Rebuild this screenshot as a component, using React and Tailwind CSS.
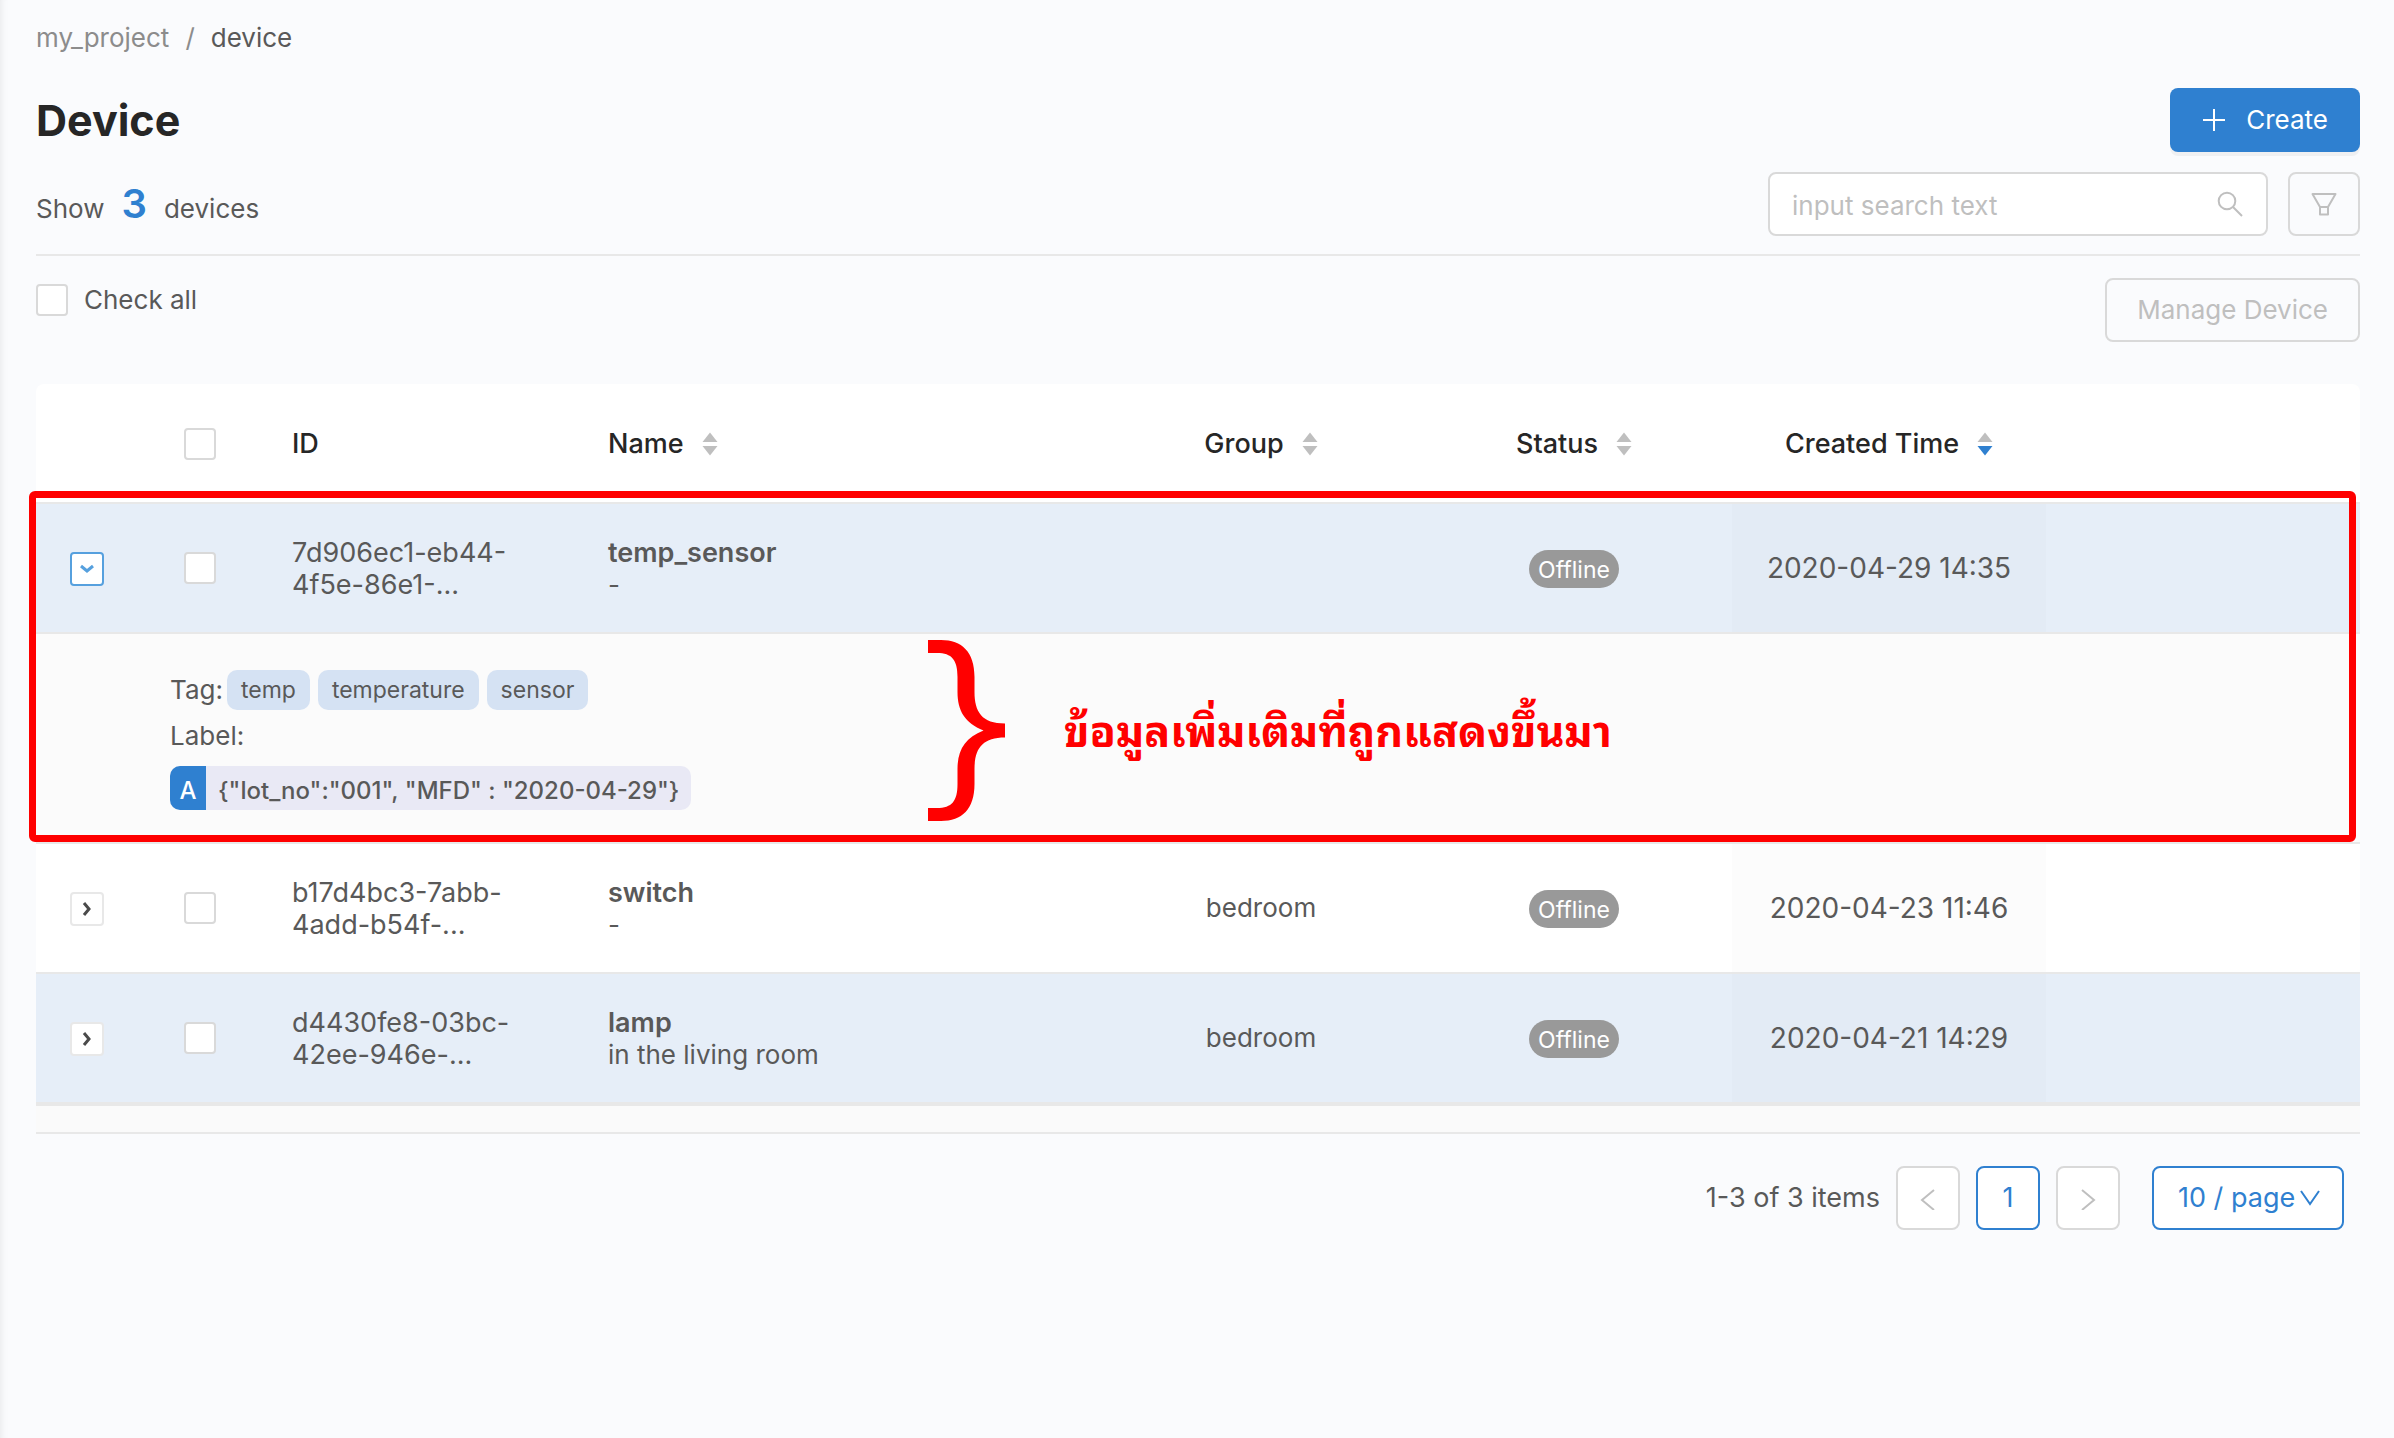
const devices = [
  { id: ["7d906ec1-eb44-", "4f5e-86e1-..."], name: "temp_sensor", description: "-", group: "", created: "2020-04-29 14:35", striped: true, expanded: true },
  { id: ["b17d4bc3-7abb-", "4add-b54f-..."], name: "switch", description: "-", group: "bedroom", created: "2020-04-23 11:46", striped: false, expanded: false },
  { id: ["d4430fe8-03bc-", "42ee-946e-..."], name: "lamp", description: "in the living room", group: "bedroom", created: "2020-04-21 14:29", striped: true, expanded: false },
];

function Checkbox(props) {
  return (
    <input
      type="checkbox"
      className="block size-8 shrink-0 appearance-none rounded-sm border-2 border-[#d9d9d9] bg-white"
      {...props}
    />
  );
}

function Sorter({ active }) {
  return (
    <svg viewBox="0 0 16 24" className="h-6 w-4" aria-hidden="true">
      <path d="M8 0.5 15.5 10H0.5Z" fill="#bfbfbf" />
      <path d="M8 23.5 15.5 14H0.5Z" fill={active ? "#2f80d0" : "#bfbfbf"} />
    </svg>
  );
}

function SortHeader({ label, active, centered }) {
  return (
    <button type="button" className={`flex items-center gap-[18px] font-medium ${centered ? "mx-auto" : ""}`}>
      {label}
      <Sorter active={active} />
    </button>
  );
}

function ExpandButton({ expanded, name }) {
  return (
    <button
      type="button"
      aria-expanded={expanded}
      aria-label={`Details of ${name}`}
      className={`mx-auto flex size-[34px] items-center justify-center rounded-sm border-2 bg-white ${
        expanded ? "border-[#56a0de] text-[#56a0de]" : "border-[#e8e8e8] text-[#4a4a4a]"
      }`}
    >
      <svg viewBox="0 0 16 16" className={`size-4 ${expanded ? "rotate-90" : ""}`} fill="none" stroke="currentColor" strokeWidth="3">
        <path d="M5 2 10 8 5 14" />
      </svg>
    </button>
  );
}

function DeviceDetails() {
  return (
    <div className="flex flex-col items-start">
      <div className="flex h-10 items-center gap-1">
        <span>Tag:</span>
        <div className="flex gap-2">
          {["temp", "temperature", "sensor"].map((tag) => (
            <span key={tag} className="flex h-10 items-center rounded-[10px] bg-[#d5e2f3] px-3.5 text-[23px]">
              {tag}
            </span>
          ))}
        </div>
      </div>
      <div className="mt-1.5 flex h-10 items-center">Label:</div>
      <div className="mt-2.5 flex h-11 items-stretch overflow-hidden rounded-[10px] bg-[#e9e9f5] text-[24px] font-medium">
        <span className="flex w-9 items-center justify-center bg-[#2f80d0] pt-1.5 text-white">A</span>
        <span className="flex items-center px-3 pt-1.5">{'{"lot_no":"001", "MFD" : "2020-04-29"}'}</span>
      </div>
    </div>
  );
}

function Annotation() {
  return (
    <div className="pointer-events-none absolute -left-[7px] right-1 top-[107px] h-[351px] rounded-md border-[7px] border-[#ff0000]">
      <svg viewBox="0 0 77 181" className="absolute left-[892px] top-[142px] h-[181px] w-[77px]" aria-hidden="true">
        <path
          d="M0 0H13C34 0 46.500 12 46.500 37V52C46.500 72 54 83.500 77 83.500V97.500C54 97.500 46.500 109 46.500 129V144C46.500 169 34 181 13 181H0V168H9C24 168 29.500 161 29.500 144V129C29.500 110 37 98 55.500 90.500C37 83 29.500 71 29.500 52V37C29.500 20 24 13 9 13H0Z"
          fill="#ff0000"
        />
      </svg>
      <p className="absolute left-[1028px] top-[204px] whitespace-nowrap font-['Waree','Noto_Sans_Thai_Looped','Garuda','Umpush','Loma',sans-serif] text-[43px] leading-[52px] font-bold text-[#ff0000]">
        ข้อมูลเพิ่มเติมที่ถูกแสดงขึ้นมา
      </p>
    </div>
  );
}

function DeviceTable() {
  return (
    <div className="relative mt-[42px]">
      <table className="w-full table-fixed border-separate border-spacing-0 text-left">
        <colgroup>
          <col className="w-[102px]" />
          <col className="w-[124px]" />
          <col className="w-[314px]" />
          <col />
          <col className="w-[310px]" />
          <col className="w-[316px]" />
          <col className="w-[314px]" />
          <col className="w-[314px]" />
        </colgroup>
        <thead>
          <tr className="h-[120px] bg-white text-[27px] text-[#262626] *:border-b-2 *:border-[#e8e8e8] *:pt-0.5 *:font-medium">
            <th className="rounded-tl-lg" />
            <th>
              <div className="flex justify-center">
                <Checkbox aria-label="Select all rows" />
              </div>
            </th>
            <th className="px-[30px]">ID</th>
            <th className="px-8"><SortHeader label="Name" /></th>
            <th><SortHeader label="Group" centered /></th>
            <th><SortHeader label="Status" centered /></th>
            <th><SortHeader label="Created Time" active centered /></th>
            <th className="rounded-tr-lg" />
          </tr>
        </thead>
        <tbody>
          {devices.map((d) => [
            <tr key={d.name} className={`h-[130px] *:border-b-2 *:border-[#e8e8e8] ${d.striped ? "bg-[#e6eef8]" : "bg-white"}`}>
              <td className="pt-0.5"><ExpandButton expanded={d.expanded} name={d.name} /></td>
              <td>
                <div className="flex justify-center">
                  <Checkbox aria-label={`Select ${d.name}`} />
                </div>
              </td>
              <td className="px-[30px] pt-0.5 text-[27px] leading-8">
                {d.id[0]}
                <br />
                {d.id[1]}
              </td>
              <td className="px-8 pt-0.5 leading-8">
                <strong className="text-[27px] font-semibold">{d.name}</strong>
                <br />
                {d.description}
              </td>
              <td className="text-center">{d.group}</td>
              <td className="pt-0.5">
                <span className="mx-auto flex h-[38px] w-[90px] items-center justify-center rounded-full bg-[#999999] pt-0.5 text-[23px] text-white">
                  Offline
                </span>
              </td>
              <td className="bg-black/1 text-center text-[28px]">{d.created}</td>
              <td />
            </tr>,
            d.expanded && (
              <tr key={`${d.name}-details`} className="h-[210px] bg-[#fbfbfb] *:border-b-2 *:border-[#e8e8e8]">
                <td />
                <td colSpan={7} className="px-8 pt-1">
                  <DeviceDetails />
                </td>
              </tr>
            ),
          ])}
        </tbody>
      </table>
      <div className="h-[30px] border-t-2 border-b-2 border-[#e8e8e8] bg-[#fafafa]" />
      <Annotation />
    </div>
  );
}

function Arrow({ d }) {
  return (
    <svg viewBox="0 0 24 24" className="size-6" fill="none" stroke="currentColor" strokeWidth="2" aria-hidden="true">
      <path d={d} />
    </svg>
  );
}

function Pagination() {
  const box = "flex size-16 items-center justify-center rounded-lg border-2 bg-white";
  return (
    <nav aria-label="Pagination" className="mt-8 flex items-center justify-end pr-4 text-[27px]">
      <span className="mr-4">1-3 of 3 items</span>
      <button type="button" aria-label="Previous page" className={`${box} mr-4 border-[#d9d9d9] text-[#bfbfbf]`}>
        <Arrow d="M18 4 6 14 18 24" />
      </button>
      <button type="button" aria-current="page" className={`${box} mr-4 border-[#2f80d0] text-[#2f80d0]`}>1</button>
      <button type="button" aria-label="Next page" className={`${box} mr-8 border-[#d9d9d9] text-[#bfbfbf]`}>
        <Arrow d="M6 4 18 14 6 24" />
      </button>
      <div className="relative">
        <select
          aria-label="Items per page"
          className="h-16 w-48 appearance-none rounded-lg border-2 border-[#2f80d0] bg-white pl-6 text-[#2f80d0]"
        >
          <option>10 / page</option>
        </select>
        <svg viewBox="0 0 20 16" className="pointer-events-none absolute right-6 top-6 h-4 w-5 text-[#2f80d0]" fill="none" stroke="currentColor" strokeWidth="2" aria-hidden="true">
          <path d="M1 1 10 14 19 1" />
        </svg>
      </div>
    </nav>
  );
}

export default function App() {
  return (
    <main className="min-h-screen bg-[#fafbfd] px-[34px] pt-5 pl-9 font-['Inter','Liberation_Sans',sans-serif] text-[26px] leading-9 text-[#595959] shadow-[inset_8px_0_8px_-8px_rgba(0,0,0,0.1)]">
      <nav aria-label="Breadcrumb" className="flex gap-4">
        <a href="#project" className="text-[#8c8c8c]">my_project</a>
        <span className="text-[#8c8c8c]">/</span>
        <a href="#device">device</a>
      </nav>

      <header className="mt-8 flex h-16 items-center justify-between">
        <h1 className="text-[43px] leading-[48px] font-bold text-[#262626]">Device</h1>
        <button
          type="button"
          className="flex h-16 items-center gap-5 rounded-lg bg-[#2f80d0] px-8 text-white shadow-[0_4px_0_rgba(0,0,0,0.045)]"
        >
          <svg viewBox="0 0 24 24" className="size-6" stroke="currentColor" strokeWidth="2" aria-hidden="true">
            <path d="M12 1V23M1 12H23" />
          </svg>
          Create
        </button>
      </header>

      <section className="mt-5 flex h-[84px] items-start justify-between border-b-2 border-[#e8e8e8]">
        <p className="flex items-baseline gap-[17px] pt-3.5">
          Show <strong className="text-[40px] leading-9 font-semibold text-[#2f80d0]">3</strong> devices
        </p>
        <div className="flex gap-5">
          <label className="flex h-16 w-[500px] items-center rounded-lg border-2 border-[#d9d9d9] bg-white px-[22px]">
            <input
              type="search"
              aria-label="Search devices"
              placeholder="input search text"
              className="min-w-0 flex-1 bg-transparent pt-1 outline-none placeholder:text-[#bfbfbf]"
            />
            <svg viewBox="0 0 28 28" className="size-7 text-[#bfbfbf]" fill="none" stroke="currentColor" strokeWidth="2" aria-hidden="true">
              <circle cx="11" cy="11" r="8.300" />
              <path d="M17 17 26 26" />
            </svg>
          </label>
          <button type="button" aria-label="Filter" className="flex h-16 w-[72px] items-center justify-center rounded-lg border-2 border-[#d9d9d9] text-[#bfbfbf]">
            <svg viewBox="0 0 28 28" className="size-7" fill="none" stroke="currentColor" strokeWidth="2" strokeLinejoin="round" aria-hidden="true">
              <path d="M2.500 4H25.500L18 17V24.500H10V17ZM10 17H18" />
            </svg>
          </button>
        </div>
      </section>

      <section className="mt-[22px] flex items-start justify-between">
        <label className="flex items-center gap-4 pt-1">
          <Checkbox />
          Check all
        </label>
        <button type="button" disabled className="h-16 rounded-lg border-2 border-[#d9d9d9] px-[30px] text-[#bfbfbf]">
          Manage Device
        </button>
      </section>

      <DeviceTable />
      <Pagination />
    </main>
  );
}
